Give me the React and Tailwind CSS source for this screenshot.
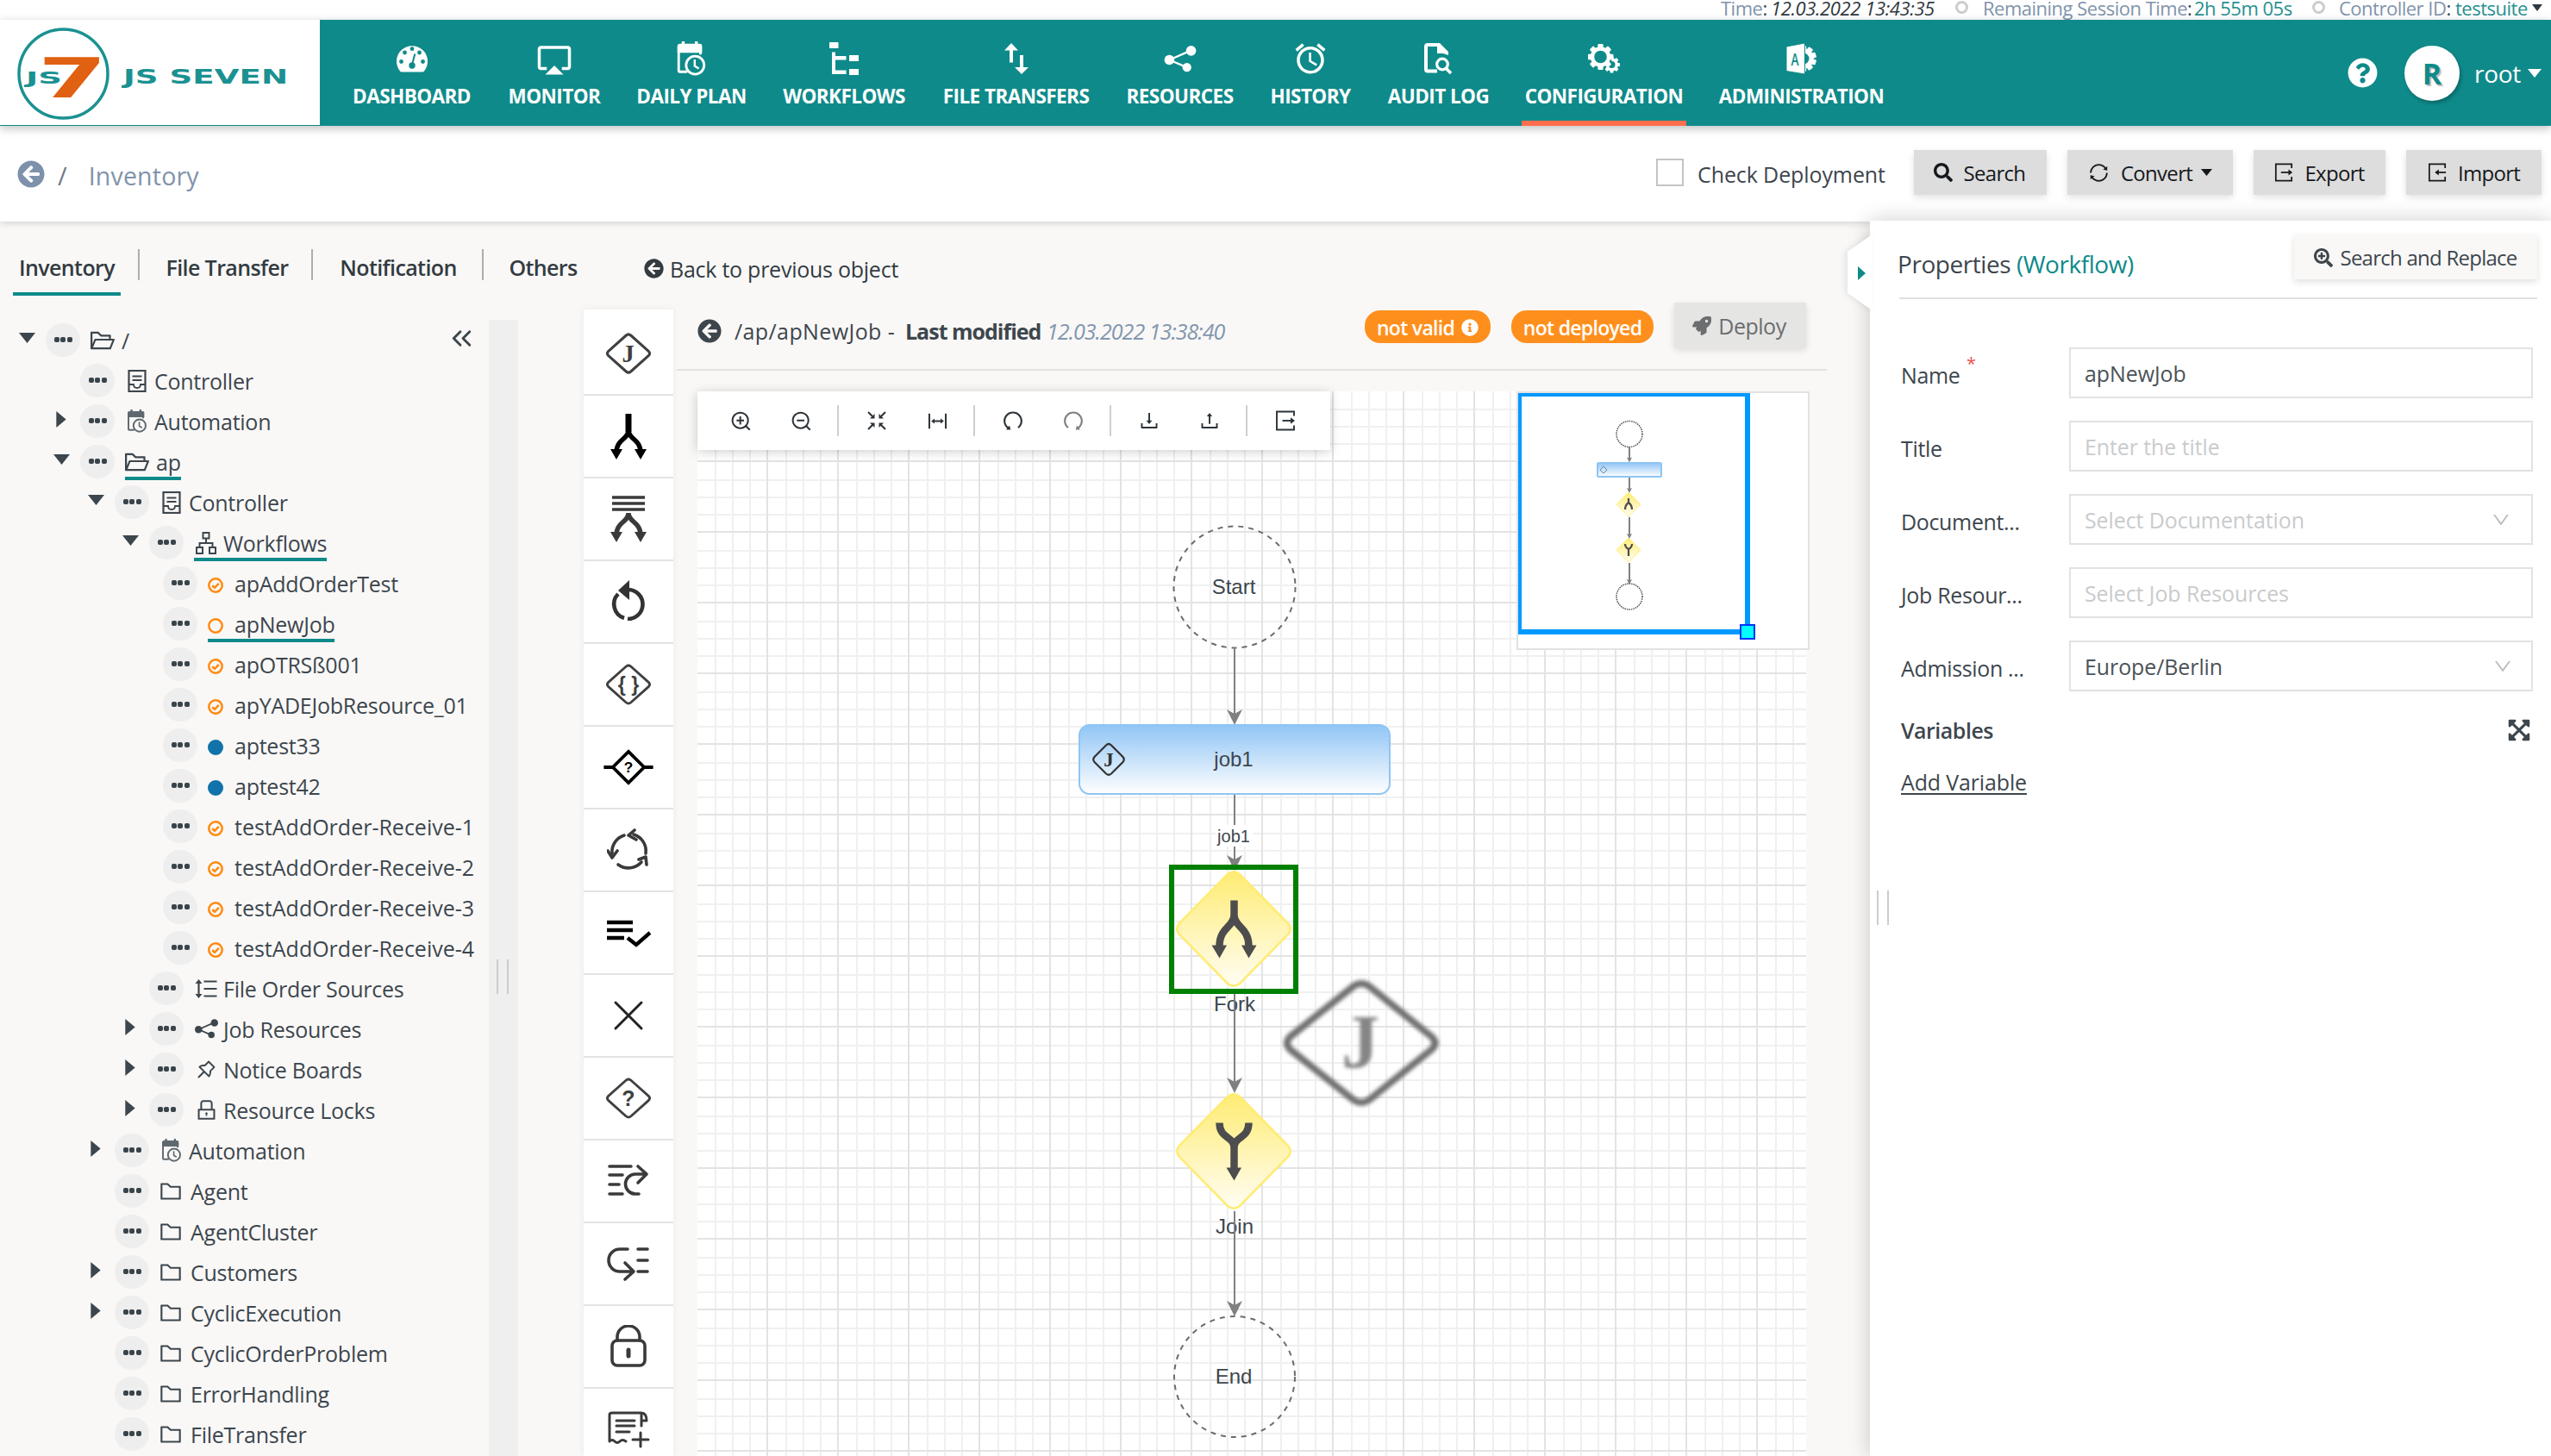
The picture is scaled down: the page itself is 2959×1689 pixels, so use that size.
import React from "react";
import { ChevronsLeft } from "lucide-react";
import { MdAirplay, MdAlarm } from "react-icons/md";
import {
  FaArrowCircleLeft,
  FaSearch,
  FaSearchPlus,
  FaQuestionCircle,
  FaInfoCircle,
  FaRocket,
  FaExpandArrowsAlt,
} from "react-icons/fa";
import {
  AiOutlineFolderOpen,
  AiOutlineFolder,
  AiOutlineLock,
  AiOutlinePushpin,
  AiOutlineSync,
  AiOutlineZoomIn,
  AiOutlineZoomOut,
  AiOutlineColumnWidth,
  AiOutlineDownload,
  AiOutlineUpload,
  AiOutlineUndo,
  AiOutlineRedo,
  AiOutlineDown,
} from "react-icons/ai";

/* ---------- shared glyphs ---------- */

function Caret({ className = "h-[10px] w-[16px]" }) {
  return (
    <svg viewBox="0 0 16 10" className={className} fill="currentColor" preserveAspectRatio="none">
      <path d="M0 0H16L8 10Z" />
    </svg>
  );
}

function Gear({ cx, cy, r, hole, teeth = 8 }) {
  const body = r * 0.78;
  const w = r * 0.42;
  return (
    <g>
      {Array.from({ length: teeth }, (_, i) => (
        <rect
          key={i}
          x={cx - w / 2}
          y={cy - r}
          width={w}
          height={r - hole - 1}
          rx={w * 0.2}
          fill="currentColor"
          transform={`rotate(${(360 / teeth) * i} ${cx} ${cy})`}
        />
      ))}
      <circle cx={cx} cy={cy} r={(body + hole) / 2} fill="none" stroke="currentColor" strokeWidth={body - hole} />
    </g>
  );
}

function DashboardIcon() {
  return (
    <svg viewBox="0 0 38 36" className="h-[36px] w-[38px]">
      <path d="M5 32.5A18 18 0 1 1 33 32.5Q32.5 33.5 31 33.5H7Q5.5 33.5 5 32.5Z" fill="#fff" />
      <g fill="#0f8a8a">
        <circle cx="6.5" cy="21.5" r="2.4" />
        <circle cx="10.5" cy="11" r="2.4" />
        <circle cx="19" cy="6.7" r="2.4" />
        <circle cx="27.5" cy="11" r="2.4" />
        <circle cx="31.5" cy="21.5" r="2.4" />
        <circle cx="19" cy="26" r="3.7" />
      </g>
      <path d="M19 25L22.3 12.5" stroke="#0f8a8a" strokeWidth="2" />
    </svg>
  );
}

function CalendarClock({ className, hole }) {
  return (
    <svg viewBox="0 0 34 42" className={className} fill="none" stroke="currentColor">
      <path d="M1.5 6V35.5Q1.5 37 3 37H12M28 6V16" strokeWidth="3" />
      <path d="M0 14V6Q0 3 3 3H27Q30 3 30 6V14Z" fill="currentColor" stroke="none" />
      <path d="M7 0V5M23 0V5" strokeWidth="3.5" />
      <circle cx="21.500" cy="29" r="11" fill={hole} strokeWidth="3" />
      <path d="M21 22V30L26 33" strokeWidth="2.5" />
    </svg>
  );
}

function FlowTreeIcon() {
  return (
    <svg viewBox="0 0 34 38" className="h-[38px] w-[34px]" fill="#fff">
      <rect x="0" y="0" width="10.5" height="7" />
      <path d="M3 11.5H7V16H19.5V20.5H7V32.5H19.5V37H3Z" />
      <rect x="23" y="15" width="11" height="7" />
      <rect x="23" y="31" width="11" height="7" />
    </svg>
  );
}

function TransferIcon() {
  return (
    <svg viewBox="0 0 28 36" className="h-[36px] w-[28px]" fill="#fff">
      <path d="M8 0L16 8.500H10V22.500H6V8.500H0Z" />
      <path d="M20 36L12 28H18V14H22V28H28Z" />
    </svg>
  );
}

function ShareNodes({ className }) {
  return (
    <svg viewBox="0 0 38 32" className={className}>
      <path d="M6 17L31 6M6 17L27 26" stroke="currentColor" strokeWidth="2.4" />
      <circle cx="6" cy="17" r="6" fill="currentColor" />
      <circle cx="32" cy="6" r="6" fill="currentColor" />
      <circle cx="27" cy="26" r="5.3" fill="currentColor" />
    </svg>
  );
}

function AuditIcon() {
  return (
    <svg viewBox="0 0 33 37" className="h-[37px] w-[33px]" fill="none" stroke="#fff">
      <path d="M15 32.5H4Q2 32.5 2 30.5V4Q2 2 4 2H17" strokeWidth="4" />
      <path d="M15 0H18L28 10V14L22 12H15Z" fill="#fff" stroke="none" />
      <circle cx="21" cy="24.5" r="6.3" strokeWidth="3.2" />
      <path d="M25 29L31 35" strokeWidth="3.5" />
    </svg>
  );
}

function GearsIcon() {
  return (
    <svg viewBox="0 0 37 34" className="h-[34px] w-[37px] text-white">
      <Gear cx={27.5} cy={24} r={9.5} hole={4} teeth={8} />
      <circle cx="14.5" cy="15" r="13.5" fill="#0f8a8a" />
      <Gear cx={14.5} cy={15} r={15} hole={7.3} teeth={8} />
    </svg>
  );
}

function AdminIcon() {
  return (
    <svg viewBox="0 0 35 36" className="h-[36px] w-[35px] text-white">
      <Gear cx={20} cy={18} r={15} hole={6.5} teeth={10} />
      <path d="M0 4L21.5 0V36L0 32.5Z" fill="#fff" stroke="#0f8a8a" strokeWidth="1" />
      <text x="10" y="25.5" textAnchor="middle" fontSize="19" fontWeight="600" fontFamily="Open Sans, sans-serif" fill="#0f8a8a" textLength="9" lengthAdjust="spacingAndGlyphs">
        A
      </text>
    </svg>
  );
}

/* Open-sided box with an arrow; `inward` flips the arrow to point into the box. */
function BoxArrow({ className, inward }) {
  return (
    <svg viewBox="0 0 24 24" className={className} fill="none" stroke="currentColor" strokeWidth="1.9">
      <path d="M22 6.500V1.500H2V22.500H22V17.500" />
      {inward ? (
        <>
          <path d="M23 12H13" />
          <path d="M9 12L14 8.300V15.700Z" fill="currentColor" stroke="none" />
        </>
      ) : (
        <>
          <path d="M8.500 12H19" />
          <path d="M23 12L18 8.300V15.700Z" fill="currentColor" stroke="none" />
        </>
      )}
    </svg>
  );
}

function ControllerIcon() {
  return (
    <svg viewBox="0 0 22 26" className="h-[26px] w-[22px]" fill="none" stroke="currentColor">
      <rect x="1.5" y="1" width="19" height="24" strokeWidth="2.2" />
      <path d="M5.5 7.5H16.5M5.5 12H16.5" strokeWidth="1.8" />
      <path d="M2 17H7Q7 21 11 21T15 17H20" strokeWidth="1.8" />
    </svg>
  );
}

function OrgIcon() {
  return (
    <svg viewBox="0 0 24 26" className="h-[26px] w-[24px]" fill="none" stroke="currentColor" strokeWidth="2">
      <rect x="8.5" y="1" width="7" height="6.5" />
      <rect x="1" y="18" width="7" height="7" />
      <rect x="16" y="18" width="7" height="7" />
      <path d="M12 8V13M4.5 18V13H19.5V18" />
    </svg>
  );
}

function FileOrderIcon() {
  return (
    <svg viewBox="0 0 26 22" className="h-[22px] w-[26px]" fill="none" stroke="currentColor">
      <path d="M4.5 3V19" strokeWidth="2.2" />
      <path d="M0.5 5L4.5 0L8.5 5ZM0.5 17L4.5 22L8.5 17Z" fill="currentColor" stroke="none" />
      <path d="M10.5 2.5H25.5M10.5 11H25.5M10.5 19.5H25.5" strokeWidth="2.2" />
    </svg>
  );
}

function ShrinkIcon() {
  return (
    <svg viewBox="0 0 22 22" className="h-[22px] w-[22px]" fill="none" stroke="currentColor" strokeWidth="2">
      <path d="M1 1L6 6M21 1L16 6M1 21L6 16M21 21L16 16" />
      <path d="M8.500 3V8.500H3ZM13.500 3V8.500H19ZM8.500 19V13.500H3ZM13.500 19V13.500H19Z" fill="currentColor" stroke="none" />
    </svg>
  );
}

function JobDiamond({ className, stroke = 3.4, color = "#404040" }) {
  return (
    <svg viewBox="0 0 60 56" className={className}>
      <path d="M27 4.500Q30 2 33 4.500L56 25Q59 28 56 31L33 51.500Q30 54 27 51.500L4 31Q1 28 4 25Z" fill="none" stroke={color} strokeWidth={stroke} />
      <text x="29.5" y="39" textAnchor="middle" fontSize="32" fontWeight="700" fontFamily="Liberation Serif, serif" fill={color}>
        J
      </text>
    </svg>
  );
}

/* ---------- top area ---------- */

function StatusLine() {
  return (
    <div className="flex h-[23px] shrink-0 items-start justify-end bg-white pr-[10px] text-[22px] leading-[18px] tracking-[-0.5px] text-[#7f93ac]">
      <span className="w-[58px] whitespace-nowrap">Time<span className="text-[#3d464d]">:</span></span>
      <span className="w-[214px] whitespace-nowrap italic tracking-[-0.4px] text-[#2f3940]">12.03.2022 13:43:35</span>
      <i className="mt-[1px] mr-[17px] h-[15px] w-[15px] rounded-full border-[3px] border-[#cccccc]" />
      <span className="w-[245px] whitespace-nowrap">Remaining Session Time<span className="text-[#3d464d]">:</span></span>
      <span className="w-[137px] whitespace-nowrap text-[#27908f]">2h 55m 05s</span>
      <i className="mt-[1px] mr-[16px] h-[15px] w-[15px] rounded-full border-[3px] border-[#cccccc]" />
      <span className="w-[135px] whitespace-nowrap">Controller ID<span className="text-[#3d464d]">:</span></span>
      <span className="w-[89px] whitespace-nowrap text-[#27908f]">testsuite</span>
      <Caret className="mt-[5px] h-[8px] w-[12px] text-[#2f3940]" />
    </div>
  );
}

function Logo() {
  return (
    <div className="h-[122px] w-[371px] shrink-0 bg-white">
      <svg viewBox="0 23 371 122" className="h-[122px] w-[371px]">
        <circle cx="73.5" cy="85.5" r="51.5" fill="none" stroke="#1b9191" strokeWidth="3.5" />
        <text x="30" y="97" fontSize="19" fontWeight="700" fontFamily="DejaVu Sans, sans-serif" fill="#1b9191" textLength="42" lengthAdjust="spacingAndGlyphs">
          JS
        </text>
        <text x="44" y="113" fontSize="64" fontWeight="700" fontFamily="DejaVu Sans, sans-serif" fill="#e06111" textLength="80" lengthAdjust="spacingAndGlyphs">
          7
        </text>
        <text x="143" y="97" fontSize="23" fontWeight="700" fontFamily="DejaVu Sans, sans-serif" fill="#1b9191" textLength="191" lengthAdjust="spacingAndGlyphs">
          JS SEVEN
        </text>
      </svg>
    </div>
  );
}

const NAV = [
  { label: "DASHBOARD", w: "w-[149px]", icon: <DashboardIcon /> },
  { label: "MONITOR", w: "w-[118px]", icon: <MdAirplay className="mt-[2px] h-[42px] w-[42px]" /> },
  { label: "DAILY PLAN", w: "w-[136px]", icon: <CalendarClock className="h-[40px] w-[34px]" hole="#0f8a8a" /> },
  { label: "WORKFLOWS", w: "w-[154px]", icon: <FlowTreeIcon /> },
  { label: "FILE TRANSFERS", w: "w-[181px]", icon: <TransferIcon /> },
  { label: "RESOURCES", w: "w-[135px]", icon: <ShareNodes className="h-[31px] w-[38px]" /> },
  { label: "HISTORY", w: "w-[104px]", icon: <MdAlarm className="h-[42px] w-[42px]" /> },
  { label: "AUDIT LOG", w: "w-[129px]", icon: <AuditIcon /> },
  { label: "CONFIGURATION", w: "w-[191px]", icon: <GearsIcon />, active: true },
  { label: "ADMINISTRATION", w: "w-[203px]", icon: <AdminIcon /> },
];

function Header() {
  return (
    <header className="relative z-20 flex h-[123px] shrink-0 bg-[#0f8a8a] text-white shadow-[0_3px_10px_rgba(0,0,0,0.25)]">
      <Logo />
      <nav className="ml-[32px] flex gap-[32px]">
        {NAV.map((n) => (
          <div key={n.label} className={"relative flex flex-col items-center " + n.w}>
            <div className="mt-[24px] flex h-[42px] items-center justify-center">{n.icon}</div>
            <span className="mt-[11px] whitespace-nowrap text-[22.5px] leading-[24px] font-bold tracking-[-0.55px]">{n.label}</span>
            {n.active && <span className="absolute inset-x-0 bottom-0 h-[6px] bg-[#ff6f4f]" />}
          </div>
        ))}
      </nav>
      <div className="ml-auto flex items-center pr-[11px]">
        <FaQuestionCircle className="h-[35px] w-[35px]" />
        <span className="ml-[31px] flex h-[64px] w-[64px] items-center justify-center rounded-full bg-white pt-[2px] text-[34px] font-bold text-[#0f8a8a] shadow-[2px_3px_4px_rgba(0,0,0,0.25)] [text-shadow:2px_2px_1px_#bbb]">
          R
        </span>
        <span className="ml-[17px] w-[62px] text-[28px] tracking-[-0.3px]">root</span>
        <Caret className="h-[10px] w-[16px]" />
      </div>
    </header>
  );
}

function BarButton({ w, icon, label, children }) {
  return (
    <button className={"flex h-[52px] items-center justify-center bg-[#dddddd] text-[24px] tracking-[-0.7px] whitespace-nowrap text-[#16191c] shadow-[0_3px_8px_rgba(0,0,0,0.12)] " + w}>
      {icon}
      <span className="mt-[1px] ml-[13px]">{label}</span>
      {children}
    </button>
  );
}

function SubHeader() {
  return (
    <div className="relative z-10 flex h-[111px] shrink-0 items-start bg-white pt-[28px] pr-[11px] shadow-[0_2px_8px_rgba(0,0,0,0.15)]">
      <FaArrowCircleLeft className="mt-[12px] ml-[20px] h-[32px] w-[32px] text-[#7d91ab]" />
      <span className="mt-[8px] ml-[15px] text-[29px] leading-[44px] text-[#6d7a86]">/</span>
      <span className="mt-[8px] ml-[25px] text-[28.5px] leading-[44px] tracking-[0.2px] text-[#7f93ac]">Inventory</span>
      <span className="mt-[10px] ml-auto h-[32px] w-[32px] border-2 border-[#c4c4c4] bg-white" />
      <span className="ml-[16px] w-[251px] text-[25px] leading-[56px] tracking-[-0.1px] whitespace-nowrap text-[#3d464d]">Check Deployment</span>
      <div className="flex gap-[24px]">
        <BarButton w="w-[154px] pr-[2px]" icon={<FaSearch className="h-[22px] w-[22px]" />} label="Search" />
        <BarButton w="w-[192px]" icon={<AiOutlineSync className="h-[25px] w-[25px]" />} label="Convert">
          <Caret className="ml-[10px] h-[8px] w-[13px]" />
        </BarButton>
        <BarButton w="w-[153px]" icon={<BoxArrow className="h-[22px] w-[22px]" />} label="Export" />
        <BarButton w="w-[157px]" icon={<BoxArrow className="h-[22px] w-[22px]" inward />} label="Import" />
      </div>
    </div>
  );
}

function Tabs() {
  return (
    <div className="flex h-[90px] shrink-0 items-start pt-[32px] text-[25px] leading-[42px] font-semibold tracking-[-0.6px] whitespace-nowrap text-[#333b41]">
      <div className="relative ml-[15px] w-[125px] text-center">
        Inventory
        <span className="absolute inset-x-0 top-[50px] h-[4px] bg-[#0f8a8a]" />
      </div>
      <i className="ml-[20px] h-[36px] w-[2px] bg-[#adadad]" />
      <span className="w-[201px] pl-[2px] text-center">File Transfer</span>
      <i className="-ml-[2px] h-[36px] w-[2px] bg-[#adadad]" />
      <span className="w-[196px] pl-[2px] text-center">Notification</span>
      <i className="h-[36px] w-[2px] bg-[#adadad]" />
      <span className="w-[138px] text-center">Others</span>
      <span className="ml-[48px] flex items-center font-normal tracking-[-0.25px]">
        <FaArrowCircleLeft className="mr-[7px] h-[23px] w-[23px]" />
        <span className="mt-[2px]">Back to previous object</span>
      </span>
    </div>
  );
}

/* ---------- inventory tree ---------- */

const PAD = ["pl-[13px]", "pl-[53px]", "pl-[93px]", "pl-[133px]", "pl-[149px]"];

const TREE = [
  [0, "down", "open", "/"],
  [1, "", "controller", "Controller"],
  [1, "right", "auto", "Automation"],
  [1, "down", "open", "ap", true],
  [2, "down", "controller", "Controller"],
  [3, "down", "org", "Workflows", true],
  [4, "", "check", "apAddOrderTest"],
  [4, "", "ring", "apNewJob", true],
  [4, "", "check", "apOTRSß001"],
  [4, "", "check", "apYADEJobResource_01"],
  [4, "", "dot", "aptest33"],
  [4, "", "dot", "aptest42"],
  [4, "", "check", "testAddOrder-Receive-1"],
  [4, "", "check", "testAddOrder-Receive-2"],
  [4, "", "check", "testAddOrder-Receive-3"],
  [4, "", "check", "testAddOrder-Receive-4"],
  [3, "", "order", "File Order Sources"],
  [3, "right", "share", "Job Resources"],
  [3, "right", "pin", "Notice Boards"],
  [3, "right", "lock", "Resource Locks"],
  [2, "right", "auto", "Automation"],
  [2, "", "folder", "Agent"],
  [2, "", "folder", "AgentCluster"],
  [2, "right", "folder", "Customers"],
  [2, "right", "folder", "CyclicExecution"],
  [2, "", "folder", "CyclicOrderProblem"],
  [2, "", "folder", "ErrorHandling"],
  [2, "", "folder", "FileTransfer"],
];

const TREE_ICON = {
  open: <AiOutlineFolderOpen className="h-[32px] w-[32px] shrink-0" />,
  folder: <AiOutlineFolder className="mr-[2px] h-[30px] w-[30px] shrink-0" />,
  controller: <ControllerIcon />,
  auto: <CalendarClock className="h-[27px] w-[24px] text-[#5f686f]" hole="#f9f8f7" />,
  org: <OrgIcon />,
  order: <FileOrderIcon />,
  share: <ShareNodes className="h-[23px] w-[27px]" />,
  pin: <AiOutlinePushpin className="h-[27px] w-[27px]" />,
  lock: <AiOutlineLock className="h-[29px] w-[29px] shrink-0" />,
};

function StatusDot({ kind }) {
  return (
    <svg viewBox="0 0 18 18" className="mt-[4px] h-[18px] w-[18px]" fill="none">
      {kind === "dot" ? (
        <circle cx="9" cy="9" r="9" fill="#1272aa" />
      ) : (
        <circle cx="9" cy="9" r="7.7" stroke="#ff8a0f" strokeWidth="2.5" />
      )}
      {kind === "check" && <path d="M5.2 9.2L8 11.8L12.8 6.8" stroke="#ff8a0f" strokeWidth="2.6" />}
    </svg>
  );
}

function TreeRow({ level, arrow, icon, label, current }) {
  const leaf = level === 4;
  const folder = icon === "open" || icon === "folder";
  const wide = leaf && label.includes("-");
  return (
    <div className={"flex h-[47px] items-center " + PAD[level]}>
      <span className="mr-[4px] flex w-[36px] justify-center">
        {arrow === "down" && <Caret className="mt-[-5px] h-[12px] w-[19px]" />}
        {arrow === "right" && (
          <svg viewBox="0 0 12 20" className="mt-[-5px] h-[19px] w-[12px]" fill="currentColor">
            <path d="M0 0L12 10L0 20Z" />
          </svg>
        )}
      </span>
      <span className="flex h-[39px] w-[40px] items-center justify-center gap-[1.5px] rounded-full bg-[#eeeeee] pb-[2px]">
        <i className="h-[6px] w-[6px] rounded-[2px] bg-[#39434a]" />
        <i className="h-[6px] w-[6px] rounded-[2px] bg-[#39434a]" />
        <i className="h-[6px] w-[6px] rounded-[2px] bg-[#39434a]" />
      </span>
      <span className="relative ml-[12px] flex h-[47px] items-center">
        {leaf ? (
          <span className="flex w-[31px]">
            <StatusDot kind={icon} />
          </span>
        ) : (
          <span className={"flex w-[28px] justify-center " + (folder ? "mr-[8px]" : "mr-[6px]")}>{TREE_ICON[icon]}</span>
        )}
        <span className={"whitespace-nowrap " + (wide ? "tracking-[0px]" : "")}>{label}</span>
        {current && <span className="absolute right-0 bottom-[2px] left-0 h-[4px] bg-[#0f8a8a]" />}
      </span>
    </div>
  );
}

function InventoryTree() {
  return (
    <div className="relative mt-[24px] w-[567px] shrink-0 text-[25px] leading-[44px] tracking-[-0.25px] text-[#3d464d]">
      {TREE.map(([level, arrow, icon, label, current], i) => (
        <TreeRow key={i} level={level} arrow={arrow} icon={icon} label={label} current={current} />
      ))}
      <ChevronsLeft className="absolute top-[3px] left-[517px] h-[37px] w-[37px]" strokeWidth={1.9} />
    </div>
  );
}

/* ---------- toolbox ---------- */

function ForkGlyph({ list }) {
  return (
    <svg viewBox="0 0 42 54" className="h-[54px] w-[42px]" fill="none" stroke={list ? "#3a3a3a" : "#000"}>
      {list ? (
        <path d="M2 2H40M2 9H40M2 16H40" strokeWidth="3.5" />
      ) : (
        <path d="M21 1V22" strokeWidth="7" />
      )}
      <path d="M21 20C21 31 7 30 7 46M21 20C21 31 35 30 35 46" strokeWidth="5.5" />
      <path d="M0 42H14L7 54ZM28 42H42L35 54Z" fill={list ? "#3a3a3a" : "#000"} stroke="none" />
    </svg>
  );
}

function DiamondText({ text, size = 24 }) {
  return (
    <svg viewBox="0 0 60 56" className="h-[50px] w-[54px]">
      <path d="M27 4.500Q30 2 33 4.500L56 25Q59 28 56 31L33 51.500Q30 54 27 51.500L4 31Q1 28 4 25Z" fill="none" stroke="#404040" strokeWidth="3.2" />
      <text x="30" y={28 + size * 0.35} textAnchor="middle" fontSize={size} fontWeight="700" fontFamily="Liberation Sans, sans-serif" fill="#404040">
        {text}
      </text>
    </svg>
  );
}

const line = { fill: "none", stroke: "#3a3a3a", strokeWidth: 3.6, strokeLinecap: "round", strokeLinejoin: "round" };

const TOOLS = [
  <JobDiamond className="h-[50px] w-[54px]" />,
  <ForkGlyph />,
  <ForkGlyph list />,
  <svg viewBox="0 0 44 48" className="mb-[4px] h-[48px] w-[44px]" fill="none" stroke="#333" strokeWidth="4.600">
    <path d="M22 12A17 17 0 1 1 21 46" />
    <path d="M17 45A17 17 0 0 1 10 17" />
    <path d="M10 13L23 1V24Z" fill="#333" stroke="none" />
  </svg>,
  <DiamondText text="{ }" size={26} />,
  <svg viewBox="0 0 60 44" className="h-[42px] w-[58px]" fill="none" stroke="#000" strokeWidth="4">
    <path d="M30 3L49 22L30 41L11 22ZM0 22H11M49 22H60" />
    <text x="30" y="28.5" textAnchor="middle" fontSize="18" fontWeight="700" fontFamily="Liberation Sans, sans-serif" fill="#000" stroke="none">?</text>
  </svg>,
  <svg viewBox="0 0 50 50" className="h-[50px] w-[50px]" {...line}>
    <path d="M6 29A20 20 0 0 1 20 8M31 7A20 20 0 0 1 45 29M40 39A20 20 0 0 1 13 42" />
    <path d="M32 2L25 8L34 13M1 26L6 34L12 26M37 36L45 33L46 42" />
  </svg>,
  <svg viewBox="0 0 52 34" className="h-[34px] w-[52px]" fill="none" stroke="#000" strokeWidth="4.4">
    <path d="M1 5H31M1 14H31M1 23H21M25 23L35 31L51 17" />
  </svg>,
  <svg viewBox="0 0 36 36" className="h-[36px] w-[36px]" fill="none" stroke="#222" strokeWidth="3" strokeLinecap="round">
    <path d="M3 3L33 33M33 3L3 33" />
  </svg>,
  <DiamondText text="?" size={28} />,
  <svg viewBox="0 0 50 42" className="h-[42px] w-[50px]" {...line}>
    <path d="M3 4H28M3 14H18M3 25H14M3 36H18M37 36H33A11 11 0 0 1 33 13H45M36 4L46 13L36 23" />
  </svg>,
  <svg viewBox="0 0 50 42" className="h-[42px] w-[50px]" {...line}>
    <path d="M24 4H15A13 13 0 0 0 15 30H30M21 20L31 30L21 39M36 4H47M36 17H47M36 30H47" />
  </svg>,
  <svg viewBox="0 0 44 50" className="h-[50px] w-[44px]" {...line}>
    <path d="M9 18V14A13 13 0 0 1 35 14V18" />
    <rect x="3" y="18" width="38" height="29" rx="6" />
    <path d="M22 29V36" strokeWidth="5" />
  </svg>,
  <svg viewBox="0 0 50 44" className="h-[44px] w-[50px]" {...line} strokeWidth="3">
    <path d="M22 36Q18 33 15 36T9 36T3 36V5Q3 3 6 3H40Q46 3 46 12H40V3M40 12V18M11 12H32M11 18H32M11 25H26M39 26V42M30 34H48" />
  </svg>,
];

function Toolbox() {
  return (
    <div className="mt-[12px] ml-[76px] w-[104px] shrink-0 bg-white shadow-[0_0_8px_rgba(0,0,0,0.06)]">
      {TOOLS.map((icon, i) => (
        <div key={i} className={"flex items-center justify-center border-b-2 border-[#e3e3e3] " + (i === 0 ? "h-[100px] pt-[4px]" : "h-[96px]")}>
          {icon}
        </div>
      ))}
    </div>
  );
}

/* ---------- workflow canvas ---------- */

const INK = "#3d464d";

function Arrow({ x, from, to, s = 1 }) {
  return (
    <g>
      <path d={`M${x} ${from}V${to - 8 * s}`} stroke="#808080" strokeWidth={2} />
      <path d={`M${x} ${to}l${-9 * s} ${-18 * s}l${9 * s} ${5 * s}l${9 * s} ${-5 * s}z`} fill="#808080" />
    </g>
  );
}

function Diamond({ cy, children }) {
  return (
    <g transform={`translate(1431 ${cy})`}>
      <path
        d="M-7 -63.500Q0 -69 7 -63.500L63.500 -6Q68 0 63.500 6L7 63.500Q0 69 -7 63.500L-63.500 6Q-68 0 -63.500 -6Z"
        fill="url(#yellow)"
        stroke="#ffec73"
        strokeWidth="2.5"
      />
      {children}
    </g>
  );
}

const ForkShape = (
  <g fill="none" stroke="#4d4d4d" strokeWidth="8.5">
    <path d="M0.5 -33V-12M0.5 -16C0.5 -2 -16.5 -2 -16.5 20M0.5 -16C0.5 -2 17.5 -2 17.5 20" />
    <path d="M-25.5 19H-8L-16.5 34ZM9 19H26.5L17.5 34Z" fill="#4d4d4d" stroke="none" />
  </g>
);

const JoinShape = (
  <g fill="none" stroke="#4d4d4d" strokeWidth="8.5">
    <path d="M-16.5 -33C-16.5 -14 0.5 -18 0.5 -4M17.5 -33C17.5 -14 0.5 -18 0.5 -4V20" />
    <path d="M-8.5 19H9L0.5 34Z" fill="#4d4d4d" stroke="none" />
  </g>
);

function Diagram() {
  return (
    <svg viewBox="809 454 1286 1235" className="absolute inset-0 h-[1235px] w-[1286px]" fontFamily="Liberation Sans, Arial, sans-serif" fontSize="24" fill={INK} textAnchor="middle">
      <defs>
        <linearGradient id="yellow" x1="0" y1="0" x2="0" y2="1">
          <stop offset="0" stopColor="#ffec73" />
          <stop offset="1" stopColor="#fffdf3" />
        </linearGradient>
        <linearGradient id="blue" x1="0" y1="0" x2="0" y2="1">
          <stop offset="0" stopColor="#90c5f5" />
          <stop offset="1" stopColor="#ffffff" />
        </linearGradient>
        <filter id="soft" x="-10%" y="-10%" width="120%" height="120%">
          <feGaussianBlur stdDeviation="2.3" />
        </filter>
      </defs>

      <circle cx="1432" cy="681" r="70.5" fill="none" stroke="#6b6b6b" strokeWidth="2" strokeDasharray="6 6" />
      <text x="1431" y="688.5">Start</text>
      <Arrow x={1432} from={751} to={841} />

      <rect x="1252" y="841" width="360" height="80" rx="12" fill="url(#blue)" stroke="#8fc5f3" strokeWidth="2" />
      <path d="M1283 864.5Q1286 861.5 1289 864.5L1302.5 878Q1305 881 1302.5 884L1289 897.5Q1286 900 1283 897.5L1269.5 884Q1267 881 1269.5 878Z" fill="none" stroke="#333" strokeWidth="2.2" />
      <text x="1286" y="888.5" fontSize="23" fontWeight="700" fontFamily="Liberation Serif, serif" fill="#333">J</text>
      <text x="1431" y="889">job1</text>

      <Arrow x={1432} from={922} to={1010} />
      <rect x="1410" y="957" width="43" height="25" fill="#fff" />
      <text x="1431" y="977" fontSize="20">job1</text>

      <rect x="1359" y="1006" width="144" height="144" fill="none" stroke="#008000" strokeWidth="6" />
      <Diamond cy={1077.5}>{ForkShape}</Diamond>
      <text x="1432" y="1173">Fork</text>
      <Arrow x={1432} from={1153} to={1268} />

      <Diamond cy={1335.5}>{JoinShape}</Diamond>
      <text x="1432" y="1431">Join</text>
      <Arrow x={1432} from={1405} to={1527} />

      <circle cx="1432" cy="1597" r="70" fill="none" stroke="#6b6b6b" strokeWidth="2" strokeDasharray="6 6" />
      <text x="1431" y="1605">End</text>

      <g filter="url(#soft)">
        <path d="M1570 1144Q1579 1138 1588 1144L1661 1203Q1668 1210 1661 1217L1588 1276Q1579 1282 1570 1276L1496 1217Q1490 1210 1496 1203Z" fill="none" stroke="#707070" strokeWidth="8" />
        <text x="1578" y="1238" fontSize="88" fontWeight="700" fontFamily="Liberation Serif, serif" fill="#858585">J</text>
      </g>
    </svg>
  );
}

function MiniDiamond({ cy, fork }) {
  return (
    <g>
      <path d={`M1889 ${cy - 14}L1903 ${cy}L1889 ${cy + 14}L1875 ${cy}Z`} fill="url(#yellow)" stroke="#ffe96b" strokeWidth="0.8" />
      <path
        d={
          fork
            ? `M1889 ${cy - 7}V${cy - 2}M1889 ${cy - 2}Q1885 ${cy + 1} 1885 ${cy + 6}M1889 ${cy - 2}Q1893 ${cy + 1} 1893 ${cy + 6}`
            : `M1885 ${cy - 7}Q1885 ${cy - 3} 1889 ${cy - 1}Q1893 ${cy - 3} 1893 ${cy - 7}M1889 ${cy - 1}V${cy + 7}`
        }
        fill="none"
        stroke="#4d4d4d"
        strokeWidth="2.2"
      />
    </g>
  );
}

function Minimap() {
  return (
    <div className="absolute top-0 left-[950px] h-[300px] w-[340px] bg-white">
      <svg viewBox="1759 454 340 300" className="h-[300px] w-[340px]">
        <rect x="1760" y="455" width="338" height="298" fill="#fff" stroke="#e2e2e2" strokeWidth="2" />
        <circle cx="1890" cy="503.5" r="15" fill="none" stroke="#555" strokeWidth="1.5" strokeDasharray="1.5 1" />
        <Arrow x={1890} from={518} to={536.5} s={0.35} />
        <rect x="1853" y="537" width="74" height="16" rx="1.5" fill="url(#blue)" stroke="#8fc5f3" strokeWidth="2" />
        <path d="M1860 541L1864 545L1860 549L1856 545Z" fill="none" stroke="#6b87a0" strokeWidth="1" />
        <Arrow x={1890} from={554} to={572} s={0.35} />
        <MiniDiamond cy={585} fork />
        <Arrow x={1890} from={600} to={625} s={0.35} />
        <MiniDiamond cy={638} />
        <Arrow x={1890} from={653} to={678} s={0.35} />
        <circle cx="1890" cy="692" r="15" fill="none" stroke="#555" strokeWidth="1.5" strokeDasharray="1.5 1" />
        <path d="M1761 456H2030V736H1761ZM1765 460V730H2024V460Z" fillRule="evenodd" fill="#0099ff" />
        <rect x="2019" y="725" width="16" height="16" fill="#00ffff" stroke="#0033ff" strokeWidth="2" />
      </svg>
    </div>
  );
}

const TOOLBAR_GROUPS = [
  [<AiOutlineZoomIn className="h-[27px] w-[27px]" />, <AiOutlineZoomOut className="h-[27px] w-[27px]" />],
  [<ShrinkIcon />, <AiOutlineColumnWidth className="h-[27px] w-[27px]" />],
  [<AiOutlineUndo className="h-[28px] w-[28px]" />, <AiOutlineRedo className="h-[28px] w-[28px] text-[#7b8085]" />],
  [<AiOutlineDownload className="h-[26px] w-[26px]" />, <AiOutlineUpload className="h-[26px] w-[26px]" />],
  [<BoxArrow className="h-[24px] w-[24px]" />],
];

function CanvasToolbar() {
  return (
    <div className="absolute top-0 left-0 flex h-[68px] w-[734px] items-center bg-white pl-[6px] text-[#2c3338] shadow-[0_2px_12px_rgba(0,0,0,0.2)]">
      {TOOLBAR_GROUPS.map((group, i) => (
        <div key={i} className={"flex h-[36px] items-center border-[#cfcfcf] pr-[7px] pl-[9px] " + (i < 4 ? "border-r-2" : "")}>
          {group.map((icon, j) => (
            <span key={j} className="flex w-[70px] justify-center">{icon}</span>
          ))}
        </div>
      ))}
    </div>
  );
}

function Grid() {
  const steps = Array.from({ length: 17 }, (_, i) => i * 82 - 1);
  const minor = steps.flatMap((s) => [s - 60, s - 40, s - 20]);
  return (
    <svg viewBox="0 0 1286 1235" className="absolute inset-0 h-[1235px] w-[1286px]" strokeWidth="2">
      <g stroke="#f0f0f0">
        {minor.map((v) => <path key={v} d={`M${v} 0V1235M0 ${v}H1286`} />)}
      </g>
      <g stroke="#e3e3e3">
        {steps.map((v) => <path key={v} d={`M${v} 0V1235M0 ${v}H1286`} />)}
      </g>
    </svg>
  );
}

function Editor() {
  return (
    <section className="ml-[4px] w-[1334px] shrink-0">
      <div className="flex h-[83px] items-start border-b-2 border-[#e1e1e1] pt-[4px] pr-[24px] text-[25px] leading-[44px] text-[#3d464d]">
        <FaArrowCircleLeft className="mt-[19px] ml-[24px] h-[28px] w-[28px]" />
        <span className="mt-[11px] ml-[15px] w-[198px] tracking-[0.4px] whitespace-nowrap">/ap/apNewJob -</span>
        <span className="mt-[11px] w-[164px] font-bold tracking-[-1px] whitespace-nowrap">Last modified</span>
        <span className="mt-[11px] tracking-[-0.95px] whitespace-nowrap text-[#8296ae] italic">12.03.2022 13:38:40</span>
        <div className="ml-auto flex items-start">
          <span className="mt-[9px] flex h-[38px] w-[146px] items-center justify-center rounded-[18px] bg-[#ff8f1c] pt-[1px] text-[23px] font-semibold tracking-[-0.7px] text-white">
            not valid <FaInfoCircle className="ml-[8px] h-[20px] w-[20px]" />
          </span>
          <span className="mt-[9px] ml-[24px] flex h-[38px] w-[165px] items-center justify-center rounded-[18px] bg-[#ff8f1c] pt-[1px] text-[23px] font-semibold tracking-[-0.7px] whitespace-nowrap text-white">
            not deployed
          </span>
          <button className="ml-[24px] flex h-[52px] w-[153px] items-center justify-center bg-[#e5e5e4] pt-[1px] pr-[2px] tracking-[-0.5px] text-[#6b6d6e] shadow-[0_3px_8px_rgba(0,0,0,0.12)]">
            <FaRocket className="mr-[8px] h-[22px] w-[22px]" />
            Deploy
          </button>
        </div>
      </div>
      <div className="relative mt-[24px] ml-[24px] h-[1235px] w-[1286px] bg-white">
        <Grid />
        <Diagram />
        <CanvasToolbar />
        <Minimap />
      </div>
    </section>
  );
}

/* ---------- properties ---------- */

function Field({ label, required, value, muted, select, chevronRight = "right-[23px]" }) {
  return (
    <div className="flex h-[59px] items-center">
      <span className="relative w-[195px] pt-[4px] text-[25px] leading-[44px] tracking-[-0.35px] whitespace-nowrap text-[#3d464d]">
        {label}
        {required && <sup className="absolute top-[-2px] left-[76px] text-[20px] leading-[30px] text-[#f0504d]">*</sup>}
      </span>
      <span className={"relative flex h-[59px] w-[538px] items-center border-2 border-[#e2e2e2] pl-[16px] text-[25px] tracking-[-0.1px] " + (muted ? "text-[#c9cbcd]" : "text-[#4b5358]")}>
        <span className="pt-[2px]">{value}</span>
        {select && <AiOutlineDown className={"absolute h-[24px] w-[24px] text-[#bdbdbd] " + chevronRight} />}
      </span>
    </div>
  );
}

function Properties() {
  return (
    <aside className="relative z-20 mt-[-1px] h-[1433px] w-[790px] shrink-0 bg-white pl-[34px] shadow-[0_0_24px_rgba(0,0,0,0.2)]">
      <svg viewBox="0 0 30 88" className="absolute top-[16px] left-[-27px] h-[88px] w-[30px] drop-shadow-[-3px_0_3px_rgba(0,0,0,0.08)]">
        <path d="M28 1L1 20V68L28 87" fill="#fff" />
        <path d="M28 0H30V88H28Z" fill="#fff" />
        <path d="M13 37L22 45L13 53Z" fill="#0f8a8a" />
      </svg>
      <div className="absolute top-[777px] left-[8px] h-[40px] w-[14px] border-x-2 border-[#cccccc]" />
      <div className="flex h-[91px] w-[740px] items-start border-b-2 border-[#e0e0e0]">
        <h2 className="mt-[26px] -ml-[2px] text-[28px] leading-[48px] tracking-[-0.45px] text-[#3d464d]">
          Properties <span className="text-[#0f8a8a]">(Workflow)</span>
        </h2>
        <button className="mt-[16px] ml-auto flex h-[52px] w-[282px] items-center justify-center bg-[#f9f8f7] pt-[1px] text-[24px] tracking-[-0.75px] text-[#3d464d] shadow-[0_3px_8px_rgba(0,0,0,0.12)]">
          <FaSearchPlus className="mr-[8px] h-[22px] w-[22px]" />
          Search and Replace
        </button>
      </div>
      <div className="mt-[56px] ml-[2px] flex flex-col gap-[26px]">
        <Field label="Name" required value="apNewJob" />
        <Field label="Title" value="Enter the title" muted />
        <Field label="Document..." value="Select Documentation" muted select />
        <Field label="Job Resour..." value="Select Job Resources" muted />
        <Field label="Admission ..." value="Europe/Berlin" select chevronRight="right-[21px]" />
      </div>
      <div className="mt-[26px] ml-[2px] flex w-[731px] items-center justify-between text-[#3d464d]">
        <span className="text-[25px] leading-[38px] font-semibold tracking-[-0.5px]">Variables</span>
        <FaExpandArrowsAlt className="h-[28px] w-[28px]" />
      </div>
      <div className="mt-[19px] ml-[2px] text-[25px] leading-[44px] tracking-[-0.15px] text-[#3d464d]">
        <span className="underline decoration-2 underline-offset-[3px]">Add Variable</span>
      </div>
    </aside>
  );
}

export default function App() {
  return (
    <div className="flex h-[1689px] w-[2959px] flex-col overflow-hidden bg-[#f9f8f7] font-['Open_Sans',sans-serif]">
      <StatusLine />
      <Header />
      <SubHeader />
      <div className="flex h-[1432px]">
        <main className="flex h-[1432px] w-[2169px] shrink-0 flex-col">
          <Tabs />
          <div className="flex h-[1342px]">
            <InventoryTree />
            <div className="mt-[24px] w-[34px] shrink-0 bg-[#efefef] pt-[742px] pl-[9px]">
              <div className="h-[40px] w-[14px] border-x-2 border-[#cccccc]" />
            </div>
            <Toolbox />
            <Editor />
          </div>
        </main>
        <Properties />
      </div>
    </div>
  );
}
